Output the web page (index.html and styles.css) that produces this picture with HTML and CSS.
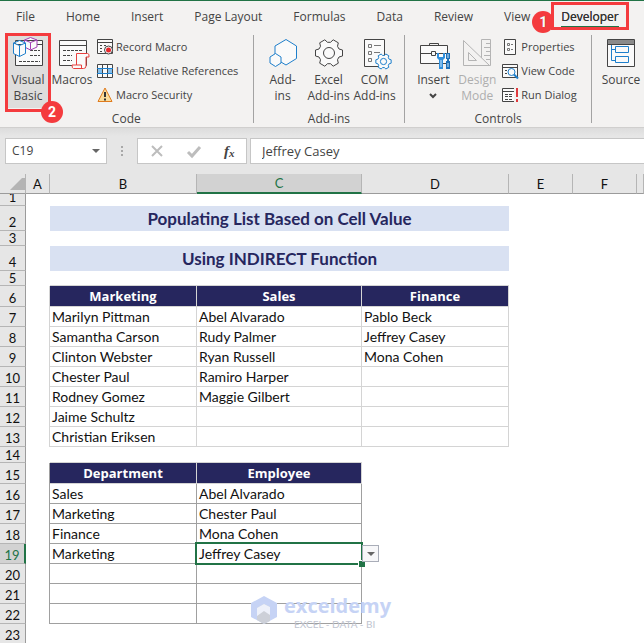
FILE: index.html
```html
<!DOCTYPE html>
<html lang="en">
<head>
  <meta charset="UTF-8" />
  <meta name="viewport" content="width=device-width, initial-scale=1.0" />
  <title>Populating List Based on Cell Value</title>
  <link rel="stylesheet" href="styles.css">
</head>
<body>
  <svg class="defs" aria-hidden="true">
    <symbol id="gear" viewBox="-15 -15 30 30">
      <path vector-effect="non-scaling-stroke" d="M10-4L13.500-3V3L10 4L8.500 6.700L9.300 10.200L4.200 13.200L1.500 10.700H-1.500L-4.200 13.200L-9.300 10.200L-8.500 6.700L-10 4L-13.500 3V-3L-10-4L-8.500-6.700L-9.300-10.200L-4.200-13.200L-1.500-10.700H1.500L4.200-13.200L9.300-10.200L8.500-6.700Z"/>
      <circle vector-effect="non-scaling-stroke" r="5.500"/>
    </symbol>
  </svg>

  <nav class="tabs">
    <button>File</button>
    <button>Home</button>
    <button>Insert</button>
    <button>Page Layout</button>
    <button>Formulas</button>
    <button>Data</button>
    <button>Review</button>
    <button>View</button>
    <button class="active">Developer<span class="mark mark-tab"></span><span class="badge badge-one">1</span></button>
  </nav>

  <div class="ribbon">
    <section class="group code">
      <div class="tools">
        <button class="big pressed">
          <svg class="icon" viewBox="0 0 32 32">
            <path class="paper" d="M3.500 2.500h27v25h-27z"/>
            <path class="dark" d="M3 6.500h28"/>
            <path class="dark dash" d="M18 12.500h10M18 17.500h10M7 23.500h21"/>
            <path class="cube purple" d="M18.500-.500l6.500 2.500v7l-6.500 3-6-3v-7zM12.500 2l6 2.500 6.500-2.500M18.500 4.500v7"/>
            <path class="cube blue" d="M7.500 2.500l6 2.500v10.500l-6 3-6-3V5zM1.500 5l6 2.500 6-2.500M7.500 7.500v11"/>
          </svg>
          <span>Visual<br>Basic</span>
          <span class="mark mark-vb"></span><span class="badge badge-two">2</span>
        </button>
        <button class="big">
          <svg class="icon" viewBox="0 0 32 32">
            <path class="paper" d="M3.500 2.500h27v25h-27z"/>
            <path class="dark" d="M3 7.500h28"/>
            <path class="dark dash" d="M7 12.500h20M7 17.500h9M7 22.500h9"/>
            <path class="red fill" d="M20.500 15.500h11q2 0 1.500 3.500h-3v9q0 2.500-2.500 2.500h-10q-1.500 0-1.500-3.500h4.500z"/>
            <path class="red" d="M20.500 27h5v3"/>
          </svg>
          <span>Macros</span>
        </button>
        <div class="list">
          <button>
            <svg class="small" viewBox="0 0 16 16">
              <path class="paper" d="M.500.500h15v14H.500z"/>
              <path class="dark" d="M0 3.500h16M3 6.500h2M3 9.500h2M3 12.500h2M7 6.500h2"/>
              <circle class="paper" cx="11.500" cy="11" r="4"/><circle cx="11.500" cy="11" r="2.500" fill="#e8262b"/>
            </svg>Record Macro</button>
          <button>
            <svg class="small" viewBox="0 0 16 16">
              <path class="paper" d="M.500 1.500h15v13H.500z"/>
              <path d="M1 6h4v4H1zM11 6h4v4h-4z" fill="#83beec"/>
              <path class="dark" d="M5.500 1v13M10.500 1v13"/><path class="blue" d="M0 5.500h16M0 10.500h16"/>
            </svg>Use Relative References</button>
          <button>
            <svg class="small" viewBox="0 0 16 16">
              <path d="M8 1L15 14.500H1z" fill="#fbdc9c" stroke="#e07b1c"/>
              <path d="M8 5v5M8 11.500v2" stroke="#333" stroke-width="2"/>
            </svg>Macro Security</button>
        </div>
      </div>
      <h2>Code</h2>
    </section>

    <section class="group addins">
      <div class="tools">
        <button class="big">
          <svg class="icon" viewBox="0 0 32 32">
            <path class="blue fill" d="M19 1.500l10.500 6.500v12.500L19 27 8 20.500V8z"/>
            <path class="blue fill" d="M8.500 15.500l5.500 3.500v6l-5.500 3.500L3 25v-6z"/>
          </svg>
          <span>Add-<br>ins</span>
        </button>
        <button class="big">
          <svg class="icon" viewBox="0 0 32 32"><use class="paper" href="#gear" x="1" y="0" width="30" height="30"/></svg>
          <span>Excel<br>Add-ins</span>
        </button>
        <button class="big">
          <svg class="icon" viewBox="0 0 32 32">
            <path class="paper" d="M5.500 1.500h20v27h-20z"/>
            <path class="gray" d="M9.500 6.500h3v3h-3zM9.500 13.500h3v3h-3zM9.500 20.500h3v3h-3zM15 7.500h7M15 14.500h6"/>
            <use class="blue fill" href="#gear" x="16" y="15" width="17" height="17"/>
          </svg>
          <span>COM<br>Add-ins</span>
        </button>
      </div>
      <h2>Add-ins</h2>
    </section>

    <section class="group controls">
      <div class="tools">
        <button class="big">
          <svg class="icon" viewBox="0 0 32 32">
            <path class="paper" d="M3.500 7.500h27v18h-27z"/>
            <path class="dark" d="M12.500 7V5.500h9V7M3 15.500h11M19 15.500h12M14.500 13.500h4v4h-4z"/>
            <path d="M20 15v5l2 2v9h4v-9l2-2v-5h-2v4h-4v-4z" fill="#2f8edb"/>
            <path d="M29 15h4v6h-1v2h1v8h-4v-8h1v-2h-1z" fill="#1d70b8"/>
            <path d="M31 16v4M31 25v4M24 22v7" stroke="#cfe6fa"/>
          </svg>
          <span>Insert</span>
          <svg class="chevron" viewBox="0 0 8 6"><path class="dark" stroke-width="2" d="M1 1l3 3 3-3"/></svg>
        </button>
        <button class="big disabled" disabled>
          <svg class="icon" viewBox="0 0 32 32">
            <path class="pale" d="M20.500 1.500h9v26h-9zM25 5.500h5M23 9.500h7M25 13.500h5M23 17.500h7M25 21.500h5"/>
            <path class="pale" d="M2.500 2.500v25h26zM7.500 14.500v8h8z"/>
          </svg>
          <span>Design<br>Mode</span>
        </button>
        <div class="list">
          <button>
            <svg class="small" viewBox="0 0 16 16">
              <path class="paper" d="M2.500.500h11v15h-11z"/>
              <path class="gray" d="M5.500 4.500h2v2h-2zM5.500 9.500h2v2h-2zM9 5.500h2M9 10.500h2"/>
            </svg>Properties</button>
          <button>
            <svg class="small" viewBox="0 0 16 16">
              <path class="paper" d="M.500 1.500h15v13H.500z"/>
              <path class="dark" d="M0 4.500h16M3 7.500h2M3 10.500h2"/>
              <circle class="blue fill" cx="9.500" cy="9" r="3.500"/><path d="M12 11.500l4 4" stroke="#1e7fcb" stroke-width="2"/>
            </svg>View Code</button>
          <button>
            <svg class="small" viewBox="0 0 16 16">
              <path class="paper" d="M12 1.500H.500v13H12"/>
              <path class="dark" d="M0 4.500h12"/><path class="dark dash" d="M3 7.500h8M3 9.500h8M3 12.500h8"/>
              <path d="M15 1v9M15 12v3" stroke="#e03a3e" stroke-width="2"/>
            </svg>Run Dialog</button>
        </div>
      </div>
      <h2>Controls</h2>
    </section>

    <section class="group xml">
      <div class="tools">
        <button class="big">
          <svg class="icon" viewBox="0 0 32 32">
            <path class="paper" d="M2.500 1.500h27v27h-27z"/>
            <path d="M3 2h26v4H3z" fill="#8a8a8a"/><path class="dark" d="M2 6.500h28"/>
            <path class="blue" d="M6.500 7v15.500h4M6.500 11.500h4M10.500 8.500h13v6h-13zM10.500 18.500h13v6h-13z"/>
          </svg>
          <span>Source</span>
        </button>
      </div>
    </section>
  </div>

  <div class="formula-bar">
    <div class="box name-box">
      <input type="text" value="C19" aria-label="Name box">
      <button aria-label="Show names"><span class="arrow"></span></button>
    </div>
    <svg class="grip" viewBox="0 0 4 12"><path d="M1 1h2v2H1zM1 5h2v2H1zM1 9h2v2H1z" fill="#a8a8a8"/></svg>
    <div class="box actions">
      <button aria-label="Cancel"><svg viewBox="0 0 14 14"><path d="M2 2l10 10M12 2L2 12" stroke="#bdbdbd" stroke-width="2"/></svg></button>
      <button aria-label="Enter"><svg viewBox="0 0 14 14"><path d="M1 8l4 4 8-9" stroke="#bdbdbd" stroke-width="3" fill="none"/></svg></button>
      <button class="fx" aria-label="Insert function"><i>f<sub>x</sub></i></button>
    </div>
    <input class="box formula" type="text" value="Jeffrey Casey" aria-label="Formula">
  </div>

  <div class="sheet">
    <table>
      <colgroup>
        <col class="w-num"><col class="w-a"><col class="w-b"><col class="w-c"><col class="w-b"><col class="w-e"><col class="w-e"><col>
      </colgroup>
      <thead>
        <tr><th class="corner"></th><th>A</th><th>B</th><th class="current">C</th><th>D</th><th>E</th><th>F</th><th></th></tr>
      </thead>
      <tbody>
        <tr class="h12 first"><th>1</th><td colspan="7"></td></tr>
        <tr class="h25"><th>2</th><td></td><td class="title" colspan="3">Populating List Based on Cell Value</td></tr>
        <tr class="h15"><th>3</th><td colspan="7"></td></tr>
        <tr class="h25"><th>4</th><td></td><td class="title" colspan="3">Using INDIRECT Function</td></tr>
        <tr class="h15 light"><th>5</th><td></td><td class="under"></td><td class="under"></td><td class="under"></td></tr>
        <tr class="h21 light"><th>6</th><td class="edge"></td><td class="head">Marketing</td><td class="head">Sales</td><td class="head">Finance</td></tr>
        <tr class="light"><th>7</th><td class="edge"></td><td class="cell">Marilyn Pittman</td><td class="cell">Abel Alvarado</td><td class="cell">Pablo Beck</td></tr>
        <tr class="light"><th>8</th><td class="edge"></td><td class="cell">Samantha Carson</td><td class="cell">Rudy Palmer</td><td class="cell">Jeffrey Casey</td></tr>
        <tr class="light"><th>9</th><td class="edge"></td><td class="cell">Clinton Webster</td><td class="cell">Ryan Russell</td><td class="cell">Mona Cohen</td></tr>
        <tr class="light"><th>10</th><td class="edge"></td><td class="cell">Chester Paul</td><td class="cell">Ramiro Harper</td><td class="cell"></td></tr>
        <tr class="light"><th>11</th><td class="edge"></td><td class="cell">Rodney Gomez</td><td class="cell">Maggie Gilbert</td><td class="cell"></td></tr>
        <tr class="light"><th>12</th><td class="edge"></td><td class="cell">Jaime Schultz</td><td class="cell"></td><td class="cell"></td></tr>
        <tr class="light"><th>13</th><td class="edge"></td><td class="cell">Christian Eriksen</td><td class="cell"></td><td class="cell"></td></tr>
        <tr class="h16 light"><th>14</th><td></td><td class="under"></td><td class="under"></td></tr>
        <tr class="h21"><th>15</th><td class="edge"></td><td class="head">Department</td><td class="head">Employee</td></tr>
        <tr><th>16</th><td class="edge"></td><td class="cell">Sales</td><td class="cell">Abel Alvarado</td></tr>
        <tr><th>17</th><td class="edge"></td><td class="cell">Marketing</td><td class="cell">Chester Paul</td></tr>
        <tr><th>18</th><td class="edge"></td><td class="cell">Finance</td><td class="cell">Mona Cohen</td></tr>
        <tr><th class="current">19</th><td class="edge"></td><td class="cell">Marketing</td><td class="cell selected">Jeffrey Casey<span class="cursor"></span><button class="drop" aria-label="Open list"><span class="arrow"></span></button></td></tr>
        <tr><th>20</th><td class="edge"></td><td class="cell"></td><td class="cell"></td></tr>
        <tr><th>21</th><td class="edge"></td><td class="cell"></td><td class="cell"></td></tr>
        <tr><th>22</th><td class="edge"></td><td class="cell"></td><td class="cell"></td></tr>
        <tr><th>23</th><td colspan="7"></td></tr>
      </tbody>
    </table>

    <div class="watermark">
      <svg viewBox="0 0 28 30">
        <path d="M14 1l13 7v14l-13 7-13-7V8z" fill="#c6d3f5"/>
        <path d="M14 9l6 3v14l-6 3-7-4V13z" fill="#cdd0d8"/>
        <path d="M14 9l6 3v8l-6-4-7 5v-8z" fill="#eef1fa"/>
      </svg>
      <div><strong>exceldemy</strong><small>EXCEL - DATA - BI</small></div>
    </div>
  </div>
</body>
</html>
```

FILE: styles.css
```css
* {
  box-sizing: border-box;
}
body {
  margin: 0;
  overflow: hidden;
  background: #fff;
  color: #444;
  font-family: "Open Sans", "Noto Sans", sans-serif;
  font-size: 12px;
  line-height: 16px;
}
button {
  border: none;
  padding: 0;
  margin: 0;
  background: none;
  color: inherit;
  font: inherit;
  white-space: nowrap;
}
input {
  font: inherit;
  color: inherit;
}
.defs {
  position: absolute;
  width: 0;
  height: 0;
}

/* ribbon tabs */
.tabs {
  display: flex;
  gap: 31px;
  height: 32px;
  padding: 0 16px;
  border-top: 1px solid #217346;
  background: #f3f2f1;
}
.tabs button {
  height: 31px;
}
.tabs .active {
  position: relative;
  color: #333;
  text-shadow: 0 0 0 #333;
}
.tabs .active::after {
  content: "";
  position: absolute;
  left: 0;
  right: 0;
  bottom: 5px;
  height: 1px;
  background: #217346;
}
.mark {
  position: absolute;
  border: 3px solid #f43b3e;
}
.mark-tab {
  inset: 1px -10px 2px;
}
.mark-vb {
  inset: -2px -1px -4px -1px;
}
.badge {
  position: absolute;
  width: 22px;
  height: 22px;
  border-radius: 50%;
  background: #f43b3e;
  color: #fff;
  font: bold 14px/22px Roboto, sans-serif;
  text-align: center;
}
.badge-one {
  top: 10px;
  left: -29px;
}
.badge-two {
  top: 66px;
  right: -13px;
}

/* ribbon groups */
.ribbon {
  display: flex;
  height: 96px;
  padding-top: 3px;
  border-bottom: 1px solid #d0cfce;
  background: #f3f2f1;
}
.group {
  position: relative;
  height: 88px;
  border-right: 1px solid #a3a3a3;
}
.group h2 {
  margin: 3px 0 0;
  font-size: 12px;
  font-weight: normal;
  line-height: 16px;
  text-align: center;
}
.tools {
  display: flex;
  height: 73px;
  padding-left: 6px;
}
.code {
  width: 254px;
}
.addins {
  width: 152px;
}
.controls {
  width: 187px;
}
.xml {
  flex: 1;
  border-right: none;
}
.big {
  position: relative;
  display: flex;
  flex-direction: column;
  align-items: center;
  width: 44px;
  padding-top: 3px;
  flex-shrink: 0;
}
.big .icon {
  width: 32px;
  height: 32px;
  margin-bottom: 2px;
  flex-shrink: 0;
}
.addins .big,
.xml .big {
  width: 46px;
}
.pressed {
  background: #dedddc;
}
.disabled {
  color: #aeaeae;
}
.chevron {
  width: 8px;
  height: 6px;
  margin-top: 5px;
}
.list {
  display: flex;
  flex-direction: column;
  padding-left: 3px;
  font-size: 11px;
}
.list button {
  display: flex;
  align-items: center;
  gap: 3px;
  height: 24px;
}
.small {
  width: 16px;
  height: 16px;
}

/* icon strokes */
svg {
  overflow: visible;
  fill: none;
}
.paper {
  fill: #fafafa;
  stroke: #444;
}
.dark {
  stroke: #444;
}
.gray {
  stroke: #777;
}
.pale {
  fill: #f3f2f1;
  stroke: #b4b4b4;
}
.dash {
  stroke-dasharray: 3 1;
}
.blue {
  stroke: #1e7fcb;
}
.red {
  stroke: #e8403f;
}
.purple {
  stroke: #a33db5;
}
.fill,
.cube {
  fill: #fafafa;
}

/* formula bar */
.formula-bar {
  display: flex;
  align-items: center;
  height: 46px;
  padding: 0 0 0 5px;
  background: linear-gradient(#dcdcdc, #e6e6e6 8px);
}
.box {
  display: flex;
  align-items: center;
  height: 26px;
  border: 1px solid #c6c6c6;
  background: #fff;
}
.name-box {
  width: 102px;
}
.name-box input {
  width: 80px;
  padding: 0 6px;
  border: none;
}
.name-box button {
  display: flex;
  justify-content: center;
  flex: 1;
}
.arrow {
  border: 4px solid transparent;
  border-top-color: #666;
  border-bottom: none;
}
.grip {
  width: 4px;
  height: 12px;
  margin: 0 13px;
}
.actions {
  width: 110px;
  justify-content: space-around;
  margin-right: 3px;
}
.actions svg {
  display: block;
  width: 14px;
  height: 14px;
}
.fx {
  font: bold 15px/18px "Liberation Serif", serif;
}
.fx sub {
  font-size: 11px;
  line-height: 1px;
  vertical-align: -1px;
}
.formula {
  flex: 1;
  min-width: 0;
  padding: 0 11px;
  border-right: none;
  font-size: 13px;
}

/* worksheet */
.sheet {
  position: relative;
  color: #111;
  font-family: Lato, "Open Sans", sans-serif;
  font-size: 14px;
}
table {
  width: 100%;
  table-layout: fixed;
  border-spacing: 0;
}
.w-num {
  width: 26px;
}
.w-a {
  width: 24px;
}
.w-b {
  width: 147px;
}
.w-c {
  width: 165px;
}
.w-e {
  width: 64px;
}
tr {
  height: 20px;
}
th,
td {
  padding: 0;
  line-height: 12px;
}
th {
  border-right: 1px solid #9b9b9b;
  border-bottom: 1px solid #b5b5b5;
  background: #e6e6e6;
  font-size: 13px;
  font-weight: normal;
  vertical-align: bottom;
}
/* above the digits of the half hidden first row */
thead {
  position: relative;
  z-index: 1;
}
thead th {
  border-right-color: #b5b5b5;
  border-bottom-color: #9b9b9b;
  vertical-align: middle;
}
tbody th {
  padding-bottom: 2px;
}
.h15 th,
.h16 th {
  padding-bottom: 1px;
}
.corner::after {
  content: "";
  display: block;
  width: 12px;
  margin-left: 10px;
  border-left: 12px solid transparent;
  border-bottom: 12px solid #b4b4b4;
}
thead .current {
  border-bottom: 2px solid #217346;
  background: #d2d2d2;
  color: #217346;
}
tbody .current {
  border-right: 2px solid #217346;
  background: #d2d2d2;
  color: #217346;
}
.h12 {
  height: 12px;
}
.h15 {
  height: 15px;
}
.h16 {
  height: 16px;
}
.h21 {
  height: 21px;
}
.h25 {
  height: 25px;
}
.first th {
  padding: 0;
  line-height: 6px;
  vertical-align: top;
}
.title {
  background: #d9e1f2;
  color: #26265e;
  font-size: 17px;
  font-weight: bold;
  text-align: center;
}
.edge {
  border-right: 1px solid #a0a0a0;
}
.under {
  border-bottom: 1px solid #d4d4d4;
}
.head,
.cell {
  border-right: 1px solid #a0a0a0;
  border-bottom: 1px solid #a0a0a0;
}
.light .edge,
.light .head,
.light .cell,
.head {
  border-color: #d4d4d4;
}
.head {
  background: #26265e;
  color: #fff;
  font-family: "Open Sans", sans-serif;
  font-size: 13px;
  font-weight: bold;
  text-align: center;
}
.cell {
  padding-left: 2px;
}
.selected {
  position: relative;
}
.cursor {
  position: absolute;
  inset: -2px;
  border: 2px solid #217346;
}
.cursor::after {
  content: "";
  position: absolute;
  right: -4px;
  bottom: -4px;
  width: 6px;
  height: 6px;
  border: 1px solid #fff;
  border-right: none;
  border-bottom: none;
  background: #217346;
}
.drop {
  position: absolute;
  top: 1px;
  left: 100%;
  display: flex;
  align-items: center;
  justify-content: center;
  width: 17px;
  height: 17px;
  margin-left: 1px;
  border: 1px solid #a9adb8;
  background: #f7f7f9;
}

.watermark {
  position: absolute;
  top: 421px;
  left: 250px;
  display: flex;
  gap: 6px;
  pointer-events: none;
}
.watermark svg {
  width: 28px;
  height: 30px;
}
.watermark strong,
.watermark small {
  display: block;
}
.watermark strong {
  color: #c6d3f5;
  font: bold 20px/22px "Open Sans", sans-serif;
}
.watermark small {
  margin-top: 3px;
  padding-left: 10px;
  color: #c0c4d0;
  font-size: 10px;
  line-height: 8px;
}
```
